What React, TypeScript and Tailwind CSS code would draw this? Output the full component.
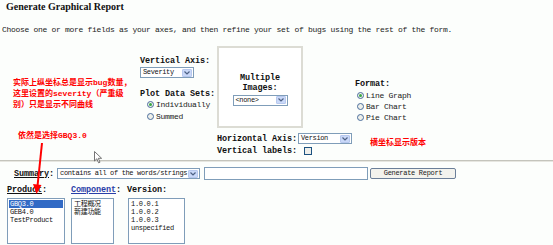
const mono = "font-['Liberation_Mono','Noto_Sans_CJK_SC',monospace]"

function Chevron() {
  return (
    <span className="ml-auto mr-[1px] flex h-[8px] w-[10px] shrink-0 items-center justify-center rounded-[1px] border border-[#b7c8ee] bg-[#c9d8f8]">
      <svg width="6" height="4" viewBox="0 0 6 4">
        <path d="M0.5 0.5 L3 3 L5.5 0.5" fill="none" stroke="#4d6185" strokeWidth="1.2" />
      </svg>
    </span>
  )
}

function Select({ value, width }: { value: string; width: string }) {
  return (
    <div
      className={`flex h-[11px] items-center overflow-hidden border border-[#7f9db9] bg-white pl-[2px] ${width} ${mono} text-[7px] leading-[9px] tracking-[-0.35px] text-[#111]`}
    >
      <span className="whitespace-nowrap">{value}</span>
      <Chevron />
    </div>
  )
}

function Radio({ label, checked }: { label: string; checked?: boolean }) {
  return (
    <div className="flex h-[11px] items-center">
      <span className="flex h-[7px] w-[7px] items-center justify-center rounded-full border border-[#4a6d9c] bg-[#eef0ea]">
        {checked && <span className="h-[3px] w-[3px] rounded-full bg-[#39a845]" />}
      </span>
      <span className={`ml-[2px] ${mono} text-[8px] leading-[11px] tracking-[-0.3px] text-[#222]`}>{label}</span>
    </div>
  )
}

function ListBox({ items, width, selected }: { items: string[]; width: string; selected?: number }) {
  return (
    <div className={`h-[46px] ${width} border border-[#7f9db9] bg-white p-[1px]`}>
      {items.map((item, i) => (
        <div
          key={item}
          className={`h-[8px] whitespace-nowrap pl-[1px] ${mono} text-[7px] leading-[8px] tracking-[-0.3px] ${
            i === selected ? 'bg-[#316ac5] text-white' : 'text-[#111]'
          }`}
        >
          {item}
        </div>
      ))}
    </div>
  )
}

export default function App() {
  const label = `${mono} font-bold text-[8.5px] leading-[10px] tracking-[-0.1px] text-[#111]`
  const note = `${mono} font-bold text-[8px] leading-[11px] text-[#ff0000] whitespace-nowrap`

  return (
    <div className="relative h-[245px] w-[553px] overflow-hidden bg-[#fcfefc]">
      {/* heading */}
      <div className="h-[14px] pl-[6px] font-['Liberation_Serif','Times_New_Roman',serif] text-[10px] font-bold leading-[14px] text-[#111]">
        Generate Graphical Report
      </div>
      <div className={`mt-[10px] h-[12px] pl-[2px] ${mono} text-[8px] leading-[12px] tracking-[-0.3px] text-[#222] whitespace-nowrap`}>
        Choose one or more fields as your axes, and then refine your set of bugs using the rest of the form.
      </div>

      {/* axes */}
      <div className="mt-[10px] flex h-[114px] items-start">
        <div className="w-[140px] pl-[13px]">
          <div className={`mt-[31px] ${note}`}>
            <div>实际上纵坐标总是显示bug数量，</div>
            <div>这里设置的severity（严重级</div>
            <div>别）只是显示不同曲线</div>
          </div>
          <div className={`ml-[5px] mt-[20px] ${note}`}>依然是选择GBQ3.0</div>
        </div>

        <div className="w-[77px]">
          <div className={`mt-[10px] ${label}`}>Vertical Axis:</div>
          <div className="mt-[1px]">
            <Select value="Severity" width="w-[54px]" />
          </div>
          <div className={`mt-[11px] ${label}`}>Plot Data Sets:</div>
          <div className="pl-[7px]">
            <Radio label="Individually" checked />
            <div className="h-[1px]" />
            <Radio label="Summed" />
          </div>
        </div>

        <div className="w-[138px]">
          <div className="flex h-[82px] w-[86px] flex-col items-center justify-center border-2 border-[#dcdcd4] bg-white pt-[4px]">
            <div className={`${label} text-center`}>Multiple</div>
            <div className={`${label} text-center`}>Images:</div>
            <div className="mt-[2px]">
              <Select value="<none>" width="w-[55px]" />
            </div>
          </div>
          <div className="mt-[5px] flex h-[11px] items-center">
            <span className={`${label} whitespace-nowrap`}>Horizontal Axis:</span>
            <div className="ml-[1px]">
              <Select value="Version" width="w-[54px]" />
            </div>
          </div>
          <div className="mt-[2px] flex h-[9px] items-center">
            <span className={`${label} whitespace-nowrap`}>Vertical labels:</span>
            <span className="ml-[7px] h-[8px] w-[8px] border border-[#1c5180] bg-[#eeeeea]" />
          </div>
        </div>

        <div>
          <div className={`mt-[33px] ${label}`}>Format:</div>
          <div className="mt-[1px] pl-[2px]">
            <Radio label="Line Graph" checked />
            <Radio label="Bar Chart" />
            <Radio label="Pie Chart" />
          </div>
          <div className={`ml-[15px] mt-[14px] ${note}`}>横坐标显示版本</div>
        </div>
      </div>

      <div className="h-[2px] border-t border-[#c4c4bc] bg-[#e6e6e0]" />

      {/* summary */}
      <div className="mt-[5px] flex h-[13px] items-center pl-[14px]">
        <span className={label}>
          <span className="underline">Summary</span>:
        </span>
        <div className="ml-[3px]">
          <Select value="contains all of the words/strings" width="w-[143px]" />
        </div>
        <div className="ml-[4px] h-[13px] w-[164px] border border-[#7f9db9] bg-white" />
        <button
          className={`ml-[2px] h-[11px] w-[86px] rounded-[2px] border border-[#6b7f99] bg-[#f3f3ee] ${mono} text-[7px] leading-[9px] tracking-[-0.3px] text-[#222]`}
        >
          Generate Report
        </button>
      </div>

      {/* product / component / version */}
      <div className="mt-[5px] flex h-[10px] items-center">
        <span className={`ml-[7px] w-[64px] ${label}`}>
          <span className="underline">Product</span>:
        </span>
        <span className={`w-[56px] ${label}`}>
          <span className="text-[#2a3fa8] underline">Component</span>:
        </span>
        <span className={label}>Version:</span>
      </div>
      <div className="mt-[3px] flex items-start">
        <div className="ml-[7px]">
          <ListBox items={['GBQ3.0', 'GEB4.0', 'TestProduct']} width="w-[58px]" selected={0} />
        </div>
        <div className="ml-[6px]">
          <ListBox items={['工程概况', '新建功能']} width="w-[43px]" />
        </div>
        <div className="ml-[14px]">
          <ListBox items={['1.0.0.1', '1.0.0.2', '1.0.0.3', 'unspecified']} width="w-[57px]" />
        </div>
      </div>

      {/* annotation arrow */}
      <svg className="pointer-events-none absolute left-0 top-0" width="553" height="245">
        <line x1="42" y1="143" x2="37.5" y2="186" stroke="#ff0000" strokeWidth="2" />
        <polygon points="33,184 41.5,185 36.5,194" fill="#ff0000" />
      </svg>

      {/* mouse pointer */}
      <svg className="pointer-events-none absolute left-[94px] top-[151px]" width="9" height="13" viewBox="0 0 9 13">
        <path d="M0.5 0.5 L0.5 10 L2.8 7.8 L4.6 11.8 L6 11.2 L4.3 7.3 L7.6 7.3 Z" fill="#fff" stroke="#666" strokeWidth="0.9" />
      </svg>
    </div>
  )
}
